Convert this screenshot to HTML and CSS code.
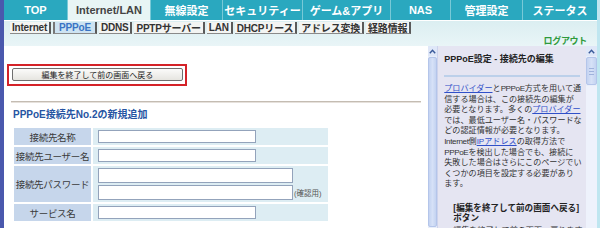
FILE: index.html
```html
<!DOCTYPE html>
<html lang="ja">
<head>
<meta charset="utf-8">
<title>PPPoE設定</title>
<link rel="stylesheet" href="styles.css">
</head>
<body>
<div class="page">
  <nav class="tabs">
    <div class="tab">TOP</div>
    <div class="tab active">Internet/LAN</div>
    <div class="tab">無線設定</div>
    <div class="tab">セキュリティー</div>
    <div class="tab">ゲーム&amp;アプリ</div>
    <div class="tab">NAS</div>
    <div class="tab">管理設定</div>
    <div class="tab">ステータス</div>
  </nav>
  <div class="band">
    <div class="subnav">
      <span class="sub">Internet</span>
      <span class="sub current">PPPoE</span>
      <span class="sub">DDNS</span>
      <span class="sub">PPTPサーバー</span>
      <span class="sub">LAN</span>
      <span class="sub">DHCPリース</span>
      <span class="sub">アドレス変換</span>
      <span class="sub">経路情報</span>
    </div>
    <div class="logout-row"><span class="logout">ログアウト</span></div>
  </div>
  <div class="main">
    <div class="content">
      <div class="highlight"><button class="back-btn">編集を終了して前の画面へ戻る</button></div>
      <div class="rule"></div>
      <h2 class="heading">PPPoE接続先No.2の新規追加</h2>
      <table class="form">
        <tr class="r1">
          <th>接続先名称</th>
          <td><input class="field" type="text"></td>
        </tr>
        <tr class="r1">
          <th>接続先ユーザー名</th>
          <td><input class="field" type="text"></td>
        </tr>
        <tr class="r2">
          <th>接続先パスワード</th>
          <td>
            <div class="pw">
              <div class="pw-stack">
                <input class="field wide" type="password">
                <input class="field wide" type="password">
              </div>
              <span class="confirm">(確認用)</span>
            </div>
          </td>
        </tr>
        <tr class="r1">
          <th>サービス名</th>
          <td><input class="field" type="text"></td>
        </tr>
      </table>
    </div>
    <div class="scroll scroll-left">
      <div class="arrow"><svg width="7" height="5" viewBox="0 0 7 5"><polyline points="0.8,4.2 3.5,1.2 6.2,4.2" fill="none" stroke="#3a5a9a" stroke-width="1.4"/></svg></div>
      <div class="thumb long"></div>
    </div>
    <aside class="help">
      <h3 class="help-title">PPPoE設定 - 接続先の編集</h3>
      <div class="help-line"></div>
      <p class="help-text"><a href="#">プロバイダー</a>と<span class="lat">PPPoE</span>方式を用いて通<br>信する場合は、この接続先の編集が<br>必要となります。多くの<a href="#">プロバイダー</a><br>では、最低ユーザー名・パスワードな<br>どの認証情報が必要となります。<br><span class="lat">Internet</span>側<a href="#">IPアドレス</a>の取得方法で<br><span class="lat">PPPoE</span>を検出した場合でも、接続に<br>失敗した場合はさらにこのページでい<br>くつかの項目を設定する必要があり<br>ます。</p>
      <h4 class="help-sub">[編集を終了して前の画面へ戻る]<br>ボタン</h4>
      <p class="help-text indent">編集を終了して前の画面へ戻ります。</p>
    </aside>
    <div class="scroll scroll-right">
      <div class="arrow"><svg width="7" height="5" viewBox="0 0 7 5"><polyline points="0.8,4.2 3.5,1.2 6.2,4.2" fill="none" stroke="#3a5a9a" stroke-width="1.4"/></svg></div>
      <div class="thumb short"><span></span><span></span><span></span></div>
      <div class="track"></div>
    </div>
  </div>
</div>
</body>
</html>
```

FILE: styles.css
```css
html, body {
  margin: 0;
  padding: 0;
}
body {
  width: 600px;
  height: 228px;
  overflow: hidden;
  background: #ffffff;
  font-family: "Liberation Sans", "Noto Sans CJK JP", sans-serif;
  color: #333;
}
.page {
  box-sizing: border-box;
  width: 600px;
  height: 228px;
  border-left: 4px solid #4a58ad;
  border-right: 3px solid #bfe6f0;
  display: flex;
  flex-direction: column;
}

/* top tabs */
.tabs {
  display: grid;
  grid-template-columns: 63px 83px 72px 80px 88px 60px 72px 1fr;
  height: 20px;
  background: #2aa8bf;
}
.tab {
  display: flex;
  align-items: center;
  justify-content: center;
  color: #ffffff;
  font-size: 11px;
  font-weight: bold;
  border-left: 1px solid #78c9d7;
  white-space: nowrap;
}
.tab:first-child {
  border-left: none;
}
.tab.active {
  background: #e8f5f5;
  color: #444;
}

/* sub navigation band */
.band {
  height: 26px;
  box-sizing: border-box;
  border-top: 1px solid #ffffff;
  background: linear-gradient(#dbeef1, #e9f5f7);
  display: flex;
  flex-direction: column;
}
.subnav {
  display: flex;
  gap: 2px;
  padding-left: 6px;
  margin-top: 1px;
  height: 12px;
}
.sub {
  display: flex;
  align-items: center;
  padding: 0 2px;
  font-size: 10px;
  font-weight: bold;
  color: #333;
  background: #f3f4f2;
  border-right: 2px solid #5a5a5a;
  border-bottom: 1px solid #8a8a8a;
  white-space: nowrap;
  letter-spacing: -0.2px;
}
.sub.current {
  background: #cde3f2;
  color: #3a74c4;
  border-left: 2px solid #777;
  padding: 0 4px;
}
.logout-row {
  display: flex;
  justify-content: flex-end;
  padding-right: 10px;
  margin-top: 0;
  height: 12px;
  align-items: center;
}
.logout {
  font-size: 9px;
  font-weight: bold;
  color: #2f9a3c;
  letter-spacing: -0.3px;
}

/* main area */
.main {
  flex: 1;
  display: flex;
  min-height: 0;
}
.content {
  width: 424px;
  background: #ffffff;
  padding-left: 3px;
  box-sizing: border-box;
}
.highlight {
  display: inline-block;
  margin-top: 18px;
  border: 2px solid #d42228;
  padding: 2px 2px 3px 3px;
  line-height: 0;
}
.back-btn {
  width: 171px;
  height: 13px;
  padding: 0;
  margin: 0;
  font-family: "Noto Sans CJK JP", "Liberation Sans", sans-serif;
  font-size: 8px;
  line-height: 11px;
  color: #222;
  background: linear-gradient(#fbfbfa, #e6e5e0);
  border: 1px solid #6f6f6f;
  border-radius: 2px;
}
.rule {
  margin: 15px 6px 0 4px;
  height: 0;
  border-top: 1px solid #c4bcb2;
  border-bottom: 1px solid #e6e1dc;
}
.heading {
  margin: 6px 0 0 6px;
  font-size: 10px;
  line-height: 12px;
  font-weight: bold;
  color: #2654a2;
}
.form {
  margin: 5px 0 0 5px;
  border-spacing: 2px;
  border-collapse: separate;
}
.form th {
  width: 77px;
  padding: 0;
  background: #c6d6eb;
  font-size: 9.5px;
  font-weight: normal;
  color: #3a3a3a;
  text-align: center;
  white-space: nowrap;
  letter-spacing: -0.3px;
}
.form td {
  width: 230px;
  padding: 0 0 0 5px;
  background: #ddedf3;
}
.form tr.r1 {
  height: 17px;
}
.form tr.r2 {
  height: 36px;
}
.field {
  display: block;
  box-sizing: border-box;
  width: 158px;
  height: 13px;
  margin: 0;
  padding: 0;
  border: 1px solid #93a3bb;
  background: #ffffff;
}
.field.wide {
  width: 195px;
  height: 15px;
}
.pw {
  display: flex;
  align-items: flex-end;
}
.pw-stack {
  display: flex;
  flex-direction: column;
  gap: 2px;
}
.confirm {
  margin-left: 1px;
  margin-bottom: 2px;
  font-size: 7.5px;
  color: #555;
  white-space: nowrap;
}

/* scrollbars */
.scroll {
  display: flex;
  flex-direction: column;
  background: #e8eefa;
  box-sizing: border-box;
}
.scroll-left {
  width: 9px;
  margin-left: 1px;
}
.scroll-right {
  width: 11px;
}
.arrow {
  height: 10px;
  display: flex;
  align-items: center;
  justify-content: center;
  background: #dfe7f8;
}
.thumb {
  background: linear-gradient(90deg, #c4d3f1, #d6e1f7 50%, #c4d3f1);
  border: 1px solid #b4c5ea;
  border-radius: 2px;
  margin: 1px 0;
}
.thumb.long {
  flex: 1;
}
.thumb.short {
  height: 26px;
  display: flex;
  flex-direction: column;
  justify-content: center;
  align-items: center;
  gap: 2px;
}
.thumb.short span {
  width: 5px;
  height: 1px;
  background: #9fb2dc;
}
.track {
  flex: 1;
  background: #eef2fc;
}

/* help panel */
.help {
  width: 149px;
  background: #e5e5f2;
  padding: 7px 0 0 6px;
  box-sizing: border-box;
  overflow: hidden;
  border-left: 1px solid #cdd3ec;
}
.help-title {
  margin: 0;
  font-size: 9px;
  line-height: 12px;
  font-weight: bold;
  color: #222;
  white-space: nowrap;
}
.help-line {
  margin: 10px 6px 0 0;
  height: 2px;
  background: #bcd0ea;
}
.help-text {
  margin: 7px 0 0 0;
  font-size: 8.1px;
  line-height: 10.6px;
  color: #333;
  white-space: nowrap;
}
.help-text a {
  color: #3050c8;
  text-decoration: underline;
}
.help-text .lat {
  letter-spacing: -0.4px;
}
.help-sub {
  margin: 13px 0 0 9px;
  font-size: 8.6px;
  line-height: 10.5px;
  font-weight: bold;
  color: #222;
  white-space: nowrap;
}
.help-text.indent {
  margin: 2px 0 0 9px;
}
```
